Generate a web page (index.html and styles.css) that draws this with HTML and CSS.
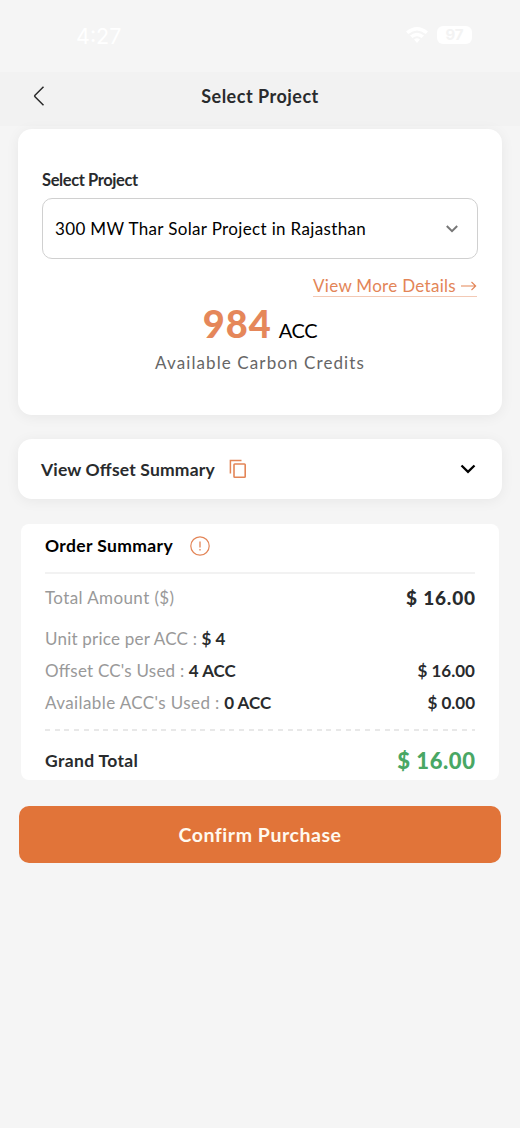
FILE: index.html
```html
<!DOCTYPE html>
<html lang="en">
<head>
<meta charset="utf-8">
<title>Select Project</title>
<link rel="stylesheet" href="styles.css">
</head>
<body>
<div class="status"><span class="clock">4:27</span>
  <div class="status-icons">
    <svg width="24" height="18" viewBox="0 0 24 18"><path d="M1 5.5Q12-3.5 23 5.5L20.7 8Q12 .8 3.3 8ZM5 9.5Q12 3.8 19 9.5L16.6 12Q12 8.4 7.4 12ZM9 13.5Q12 11 15 13.5L12 17Z" fill="#fff"/></svg>
    <span class="battery">97</span>
  </div>
</div>
<header class="header">
  <svg class="back" width="14" height="22" viewBox="0 0 14 22"><path d="M11.5 1.8 3 10.2Q2.2 11 3 11.8L11.5 20.2" fill="none" stroke="#292929" stroke-width="1.5"/></svg>
  <h1 class="title">Select Project</h1>
</header>
<main class="content">
  <section class="card project">
    <div class="label">Select Project</div>
    <div class="select"><span>300 MW Thar Solar Project in Rajasthan</span>
      <svg width="14" height="10" viewBox="0 0 14 10"><path d="M1.8 2 7 7.2 12.2 2" fill="none" stroke="#777" stroke-width="2"/></svg>
    </div>
    <div class="more-row"><a class="more"><span>View More Details</span>
      <svg width="16" height="10" viewBox="0 0 16 10"><path d="M0 5H14.5M10.5 1 14.7 5 10.5 9" fill="none" stroke="#e38557" stroke-width="1.1"/></svg></a></div>
    <div class="credits"><span class="amount">984</span><span class="unit">ACC</span></div>
    <div class="caption">Available Carbon Credits</div>
  </section>
  <section class="card offset">
    <span class="offset-title">View Offset Summary</span>
    <svg class="copy" width="18" height="20" viewBox="0 0 18 20"><path d="M1.4 14.5V1.4H12.5" fill="none" stroke="#e38557" stroke-width="1.5"/><rect x="5" y="5" width="11.2" height="13.2" rx=".8" fill="none" stroke="#e38557" stroke-width="1.6"/></svg>
    <svg class="expand" width="16" height="10" viewBox="0 0 16 10"><path d="M1.5 1.5 8 7.8 14.5 1.5" fill="none" stroke="#000" stroke-width="2.3"/></svg>
  </section>
  <section class="order">
    <div class="order-head"><span class="order-title">Order Summary</span>
      <svg width="20" height="20" viewBox="0 0 20 20"><circle cx="10" cy="10" r="9.2" fill="none" stroke="#e38557" stroke-width="1.2"/><path d="M10 5.5V11.5M10 13V14.5" stroke="#e38557" stroke-width="1.3"/></svg>
    </div>
    <div class="row total"><span class="name wide">Total Amount ($)</span><b class="total-value">$ 16.00</b></div>
    <div class="row unit-price"><span><span class="name">Unit price per ACC :</span> <b>$ 4</b></span></div>
    <div class="row"><span><span class="name">Offset CC's Used :</span> <b>4 ACC</b></span><b>$ 16.00</b></div>
    <div class="row"><span><span class="name wide">Available ACC's Used :</span> <b>0 ACC</b></span><b>$ 0.00</b></div>
    <div class="dashes"></div>
    <div class="row grand"><span class="grand-label">Grand Total</span><b class="grand-value">$ 16.00</b></div>
  </section>
  <button class="confirm">Confirm Purchase</button>
</main>
</body>
</html>
```
FILE: styles.css
```css
* { box-sizing: border-box; }
html { background: #fff; }
body { margin: 0; height: 1128px; overflow: hidden; background: #f5f5f5; color: #292b2d; font-family: Lato, sans-serif; font-feature-settings: "liga" 1; }
svg { display: block; flex: none; }
span, b { white-space: nowrap; }
.status { height: 72px; display: flex; justify-content: space-between; padding: 24px 48px 0 76px; }
.clock { color: #fff; font-size: 21.5px; line-height: 24px; font-family: Inter, sans-serif; }
.status-icons { display: flex; gap: 8px; padding-top: 2px; }
.battery { width: 35px; height: 18px; border-radius: 6px; background: #fff; color: #f3f3f3; font: bold 15px/18px Inter, sans-serif; text-align: center; }
.header { height: 54px; background: #f2f2f2; display: grid; grid-template-columns: 60px 1fr 60px; align-items: center; padding-bottom: 7px; }
.back { margin-left: 32px; }
.title { margin: 0; font-size: 18px; font-weight: bold; letter-spacing: .5px; text-align: center; }
.content { padding: 3px 18px 0; }
.card { background: #fff; border-radius: 14px; box-shadow: 0 2px 14px rgba(0,0,0,.06); }
.project { height: 286px; padding: 40px 24px 0; }
.label { font-size: 16.5px; line-height: 22px; font-weight: bold; letter-spacing: -.4px; margin-bottom: 7px; }
.select { height: 61px; border: 1.5px solid #d0d0d0; border-radius: 10px; display: flex; justify-content: space-between; align-items: center; padding: 0 18px 0 12px; font-size: 17px; letter-spacing: .35px; color: #000; }
.more-row { display: flex; justify-content: flex-end; margin-top: 16px; }
.more { display: flex; align-items: center; gap: 5px; height: 22px; border-bottom: 1px solid #f3c9b5; color: #e38557; font-size: 17px; letter-spacing: .3px; margin-right: 1px; }
.credits { display: flex; justify-content: center; align-items: baseline; gap: 7px; height: 44px; line-height: 44px; margin-top: 4px; }
.amount { color: #e5875a; font-size: 38px; font-weight: 900; letter-spacing: 1px; }
.unit { color: #000; font-size: 20px; letter-spacing: -.4px; }
.caption { text-align: center; color: #666; font-size: 17px; letter-spacing: 1.1px; line-height: 22px; margin-top: 7px; }
.offset { height: 60px; margin-top: 24px; display: flex; align-items: center; padding: 0 26px 0 23px; }
.offset-title { font-size: 17.5px; font-weight: bold; letter-spacing: .17px; }
.copy { margin-left: 14px; }
.expand { margin-left: auto; }
.order { margin: 25px 3px 0; height: 256px; background: #fff; border-radius: 8px; padding: 0 24px; }
.order-head { height: 50px; border-bottom: 2px solid #f2f2f2; display: flex; align-items: center; gap: 17px; padding-bottom: 5px; color: #000; }
.order-title { font-size: 17.5px; font-weight: bold; letter-spacing: .37px; }
.row { display: flex; justify-content: space-between; align-items: center; height: 32px; font-size: 17px; color: #999; }
.row b { color: #292b2d; }
.name { letter-spacing: .22px; }
.name.wide { letter-spacing: .4px; }
.total { height: 46px; }
.row .total-value { font-size: 19px; font-weight: 900; letter-spacing: .8px; margin-right: -.8px; }
.unit-price { margin-top: 2px; }
.dashes { height: 2px; margin-top: 11px; background: repeating-linear-gradient(90deg, #e8e8e8 0 5px, transparent 5px 9.7px); }
.grand { height: 58px; }
.grand-label { color: #292b2d; font-weight: bold; font-size: 17.5px; letter-spacing: .35px; }
.row .grand-value { color: #49a764; font-size: 22px; font-weight: 900; letter-spacing: .6px; margin-right: -.6px; }
.confirm { display: block; width: 482px; height: 57px; margin: 26px 1px 0; border: 0; border-radius: 10px; background: #e17439; color: #fff9ef; font: bold 19.5px Lato, sans-serif; letter-spacing: .55px; }
```
